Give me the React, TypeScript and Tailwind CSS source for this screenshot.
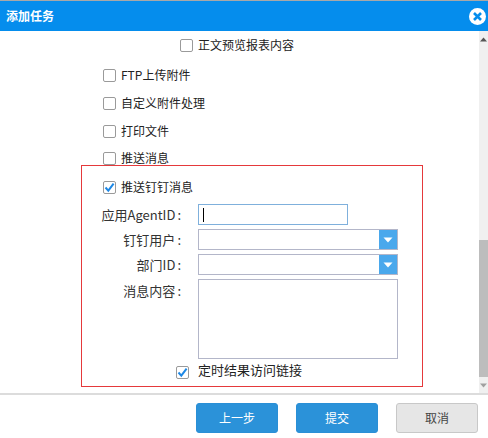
import React from 'react';

const font = { fontFamily: '"Noto Sans CJK SC", "Liberation Sans", sans-serif' };

const Check = ({ checked = false }: { checked?: boolean }) => (
  <span className="flex h-[13px] w-[13px] shrink-0 items-center justify-center rounded-[2px] border border-[#9a9a9a] bg-white">
    {checked && (
      <svg width="11" height="11" viewBox="0 0 11 11">
        <path d="M1.5 5.5 L4.3 8.6 L9.6 1.6" fill="none" stroke="#1e88e5" strokeWidth="2" />
      </svg>
    )}
  </span>
);

const CheckRow = ({ label, checked, className }: { label: string; checked?: boolean; className: string }) => (
  <div className={`flex h-[14px] items-center gap-[5px] text-xs text-[#222] ${className}`}>
    <Check checked={checked} />
    <span>{label}</span>
  </div>
);

const Label = ({ text, className = '' }: { text: string; className?: string }) => (
  <span className={`w-[116px] shrink-0 pr-[17px] text-right text-[13px] leading-[14px] text-[#333] ${className}`}>
    {text}
    <span className="ml-[2px]">:</span>
  </span>
);

const SelectRow = ({ label }: { label: string }) => (
  <div className="mt-1 flex h-[21px] items-center">
    <Label text={label} />
    <div className="flex h-[21px] w-[200px] border border-[#b3b6c9] bg-white">
      <div className="flex-1" />
      <div className="flex w-[18px] items-center justify-center bg-[#4aa8ec]">
        <svg width="10" height="6" viewBox="0 0 10 6">
          <path d="M0.5 0.5 H9.5 L5 5.5 Z" fill="#fff" />
        </svg>
      </div>
    </div>
  </div>
);

export default function App() {
  return (
    <div className="flex h-[438px] w-[488px] flex-col overflow-hidden bg-white" style={font}>
      <div className="h-px bg-[#a8a8a8]" />
      <div className="flex h-[30px] shrink-0 items-center justify-between bg-[#058ded] pl-[6px] pr-[2px]">
        <span className="text-xs font-bold text-white">添加任务</span>
        <svg width="17" height="17" viewBox="0 0 17 17">
          <circle cx="8.5" cy="8.5" r="8.5" fill="#fff" />
          <path d="M5 5 L12 12 M12 5 L5 12" stroke="#058ded" strokeWidth="2.6" />
        </svg>
      </div>

      <div className="flex h-[362px] shrink-0">
        <div className="flex-1 overflow-hidden pt-[7px]">
          <CheckRow label="正文预览报表内容" className="ml-[180px]" />
          <CheckRow label="FTP上传附件" className="ml-[103px] mt-4" />
          <CheckRow label="自定义附件处理" className="ml-[103px] mt-[14px]" />
          <CheckRow label="打印文件" className="ml-[103px] mt-[14px]" />
          <CheckRow label="推送消息" className="ml-[103px] mt-[13px]" />

          <div className="ml-[81px] h-[222px] w-[342px] border border-[#e5393b] pt-[14px]">
            <CheckRow label="推送钉钉消息" checked className="ml-[21px]" />
            <div className="mt-[10px] flex h-[21px] items-center">
              <Label text="应用AgentID" />
              <div className="flex h-[21px] w-[150px] items-center border border-[#7fb0dc] bg-white pl-1">
                <span className="h-[14px] w-px bg-black" />
              </div>
            </div>
            <SelectRow label="钉钉用户" />
            <SelectRow label="部门ID" />
            <div className="mt-1 flex">
              <Label text="消息内容" className="mt-[5px]" />
              <div className="h-[80px] w-[200px] border border-[#b3b6c9] bg-white" />
            </div>
            <div className="ml-[94px] mt-[2px] flex items-start gap-[9px] text-[13px] text-[#222]">
              <span className="mt-[5px]">
                <Check checked />
              </span>
              <span className="leading-[18px]">定时结果访问链接</span>
            </div>
          </div>
        </div>

        <div className="flex w-[9px] shrink-0 flex-col bg-[#f0f0f0]">
          <svg className="mt-[6px]" width="9" height="5" viewBox="0 0 9 5">
            <path d="M4.5 0.5 L8 4.5 H1 Z" fill="#555" />
          </svg>
          <div className="mt-[198px] h-[137px] bg-[#bdbdbd]" />
          <svg className="mt-[6px]" width="9" height="5" viewBox="0 0 9 5">
            <path d="M1 0.5 H8 L4.5 4.5 Z" fill="#a0a0a0" />
          </svg>
        </div>
      </div>

      <div className="flex flex-1 justify-end gap-[18px] border-t-2 border-[#dcdcdc] pr-[10px] pt-[8px]">
        <button className="h-[30px] w-[82px] rounded-[3px] border border-[#2a8fd6] bg-[#2b92d9] text-xs text-white">上一步</button>
        <button className="h-[30px] w-[82px] rounded-[3px] border border-[#2a8fd6] bg-[#2b92d9] text-xs text-white">提交</button>
        <button className="h-[30px] w-[82px] rounded-[3px] border border-[#c8c8c8] bg-[#e6e6e6] text-xs text-[#444]">取消</button>
      </div>
    </div>
  );
}
